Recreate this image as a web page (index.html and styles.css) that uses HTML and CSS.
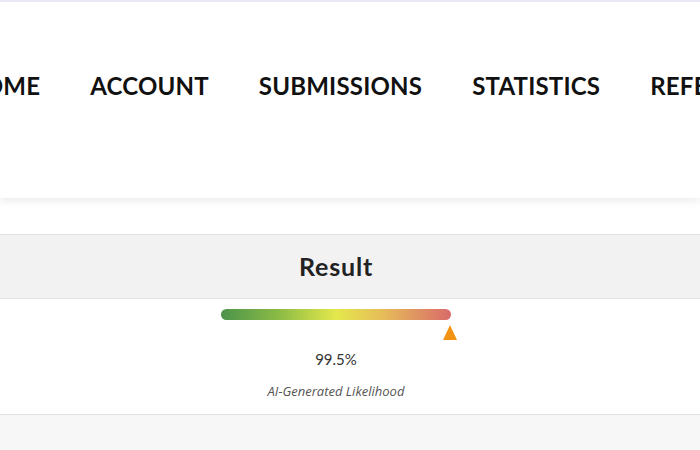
FILE: index.html
```html
<!DOCTYPE html>
<html lang="en">
<head>
    <meta charset="UTF-8">
    <meta name="viewport" content="width=device-width, initial-scale=1.0">
    <title>Result</title>
    <link rel="stylesheet" href="styles.css">
</head>
<body>
    <header class="site-header">
        <nav class="main-nav">
            <a href="#" class="nav-link">HOME</a>
            <a href="#" class="nav-link">ACCOUNT</a>
            <a href="#" class="nav-link">SUBMISSIONS</a>
            <a href="#" class="nav-link">STATISTICS</a>
            <a href="#" class="nav-link">REFERENCES</a>
        </nav>
    </header>

    <main class="content">
        <section class="result-table">
            <div class="result-head">Result</div>
            <div class="result-body">
                <div class="meter">
                    <div class="meter-bar"></div>
                    <!-- marker sits at the score -->
                    <div class="meter-marker" style="left: 99.5%;"></div>
                </div>
                <div class="score">99.5%</div>
                <div class="score-label">AI-Generated Likelihood</div>
            </div>
        </section>
    </main>
</body>
</html>
```

FILE: styles.css
```css
body {
    margin: 0;
    padding: 0;
    font-family: 'Lato', 'Open Sans', sans-serif;
    background-color: #f7f7f7;
    color: #222;
    overflow: hidden;
}

.site-header {
    height: 196px;
    background: #fff;
    border-top: 2px solid #e8e8f6;
    box-shadow: 0 3px 8px rgba(0, 0, 0, 0.08);
    position: relative;
    z-index: 1;
}

.main-nav {
    display: flex;
    gap: 50px;
    padding-top: 69px;
    margin-left: -35px;
    white-space: nowrap;
}

.nav-link {
    font-size: 24px;
    font-weight: 700;
    letter-spacing: 0.2px;
    color: #111;
    text-decoration: none;
}

.content {
    background: #fff;
    padding-top: 36px;
}

.result-table {
    border-top: 1px solid #e2e2e2;
    border-bottom: 1px solid #e2e2e2;
}

.result-head {
    background: #f2f2f2;
    border-bottom: 1px solid #e2e2e2;
    height: 63px;
    line-height: 63px;
    text-align: center;
    font-size: 25px;
    font-weight: 700;
    letter-spacing: 0.8px;
    color: #222;
    padding-right: 28px;
}

.result-body {
    background: #fff;
    height: 115px;
    display: flex;
    flex-direction: column;
    align-items: center;
    padding-right: 28px;
}

.meter {
    position: relative;
    width: 230px;
    margin-top: 10px;
}

.meter-bar {
    height: 11px;
    border-radius: 6px;
    background: linear-gradient(to right, #4b934b 0%, #8bbb45 25%, #e4e84c 50%, #e6b85a 72%, #d96a6a 100%);
}

.meter-marker {
    position: absolute;
    top: 16px;
    width: 0;
    height: 0;
    margin-left: -7px;
    border-left: 7px solid transparent;
    border-right: 7px solid transparent;
    border-bottom: 15px solid #f39314;
}

.score {
    margin-top: 30px;
    font-size: 15px;
    color: #333;
}

.score-label {
    margin-top: 14px;
    font-family: 'Open Sans', 'Lato', sans-serif;
    font-size: 13px;
    font-style: italic;
    color: #555;
}
```
